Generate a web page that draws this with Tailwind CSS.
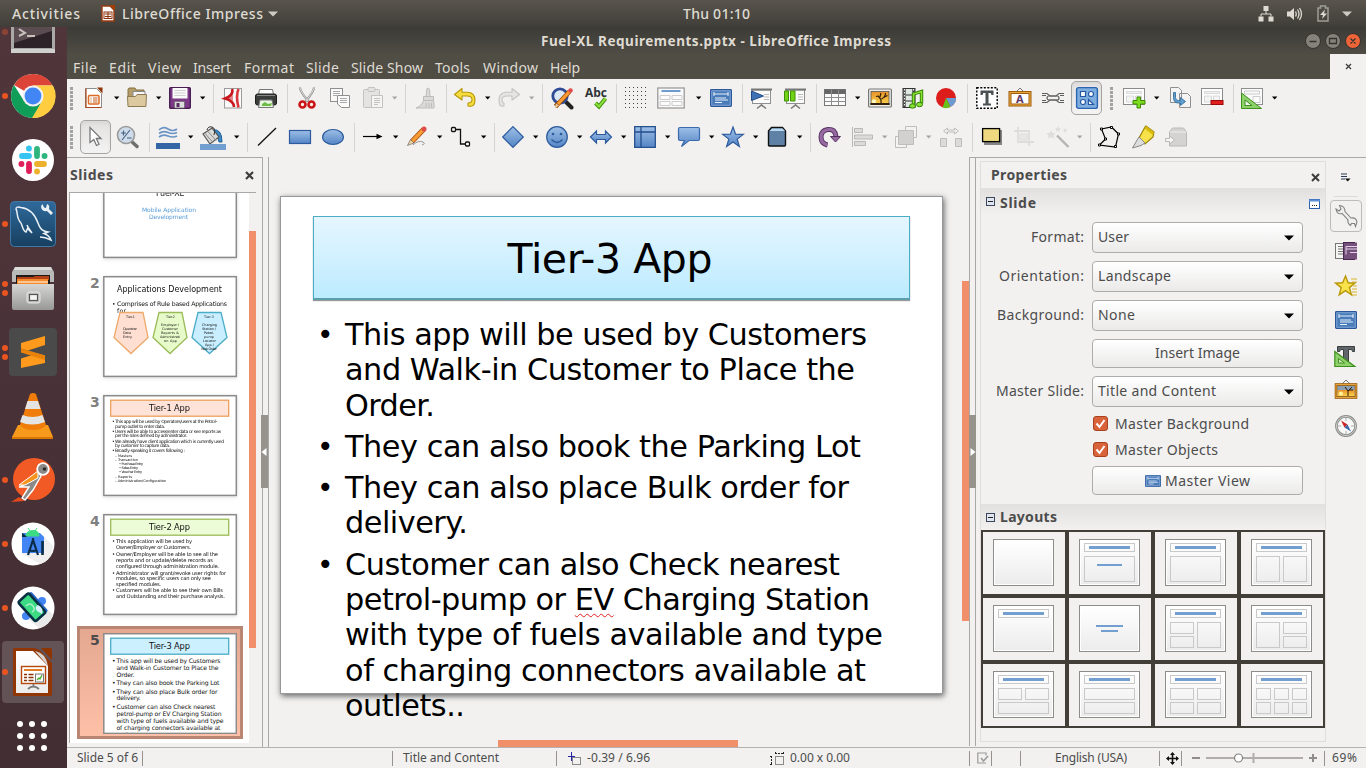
<!DOCTYPE html>
<html lang="en">
<head>
<meta charset="utf-8">
<title>Fuel-XL Requirements.pptx - LibreOffice Impress</title>
<script src="https://cdn.jsdelivr.net/npm/@tailwindcss/browser@4"></script>
</head>
<body class="w-[1366px] h-[768px] overflow-hidden flex flex-col bg-[#f2f1f0] text-[#4c4c4c] text-[14.5px] font-['Noto_Sans','Liberation_Sans',sans-serif]">

<!-- shared symbols -->
<svg class="absolute w-0 h-0">
  <defs>
    <linearGradient id="blue" x1="0" y1="0" x2="0" y2="1"><stop offset="0" stop-color="#9dbfe6"/><stop offset="1" stop-color="#5585c6"/></linearGradient>
    <linearGradient id="gold" x1="0" y1="0" x2="0" y2="1"><stop offset="0" stop-color="#e8912a"/><stop offset="1" stop-color="#f9d24a"/></linearGradient>
    <linearGradient id="paper" x1="0" y1="0" x2="0" y2="1"><stop offset="0" stop-color="#ffffff"/><stop offset="1" stop-color="#ececec"/></linearGradient>
    <linearGradient id="steel" x1="0" y1="0" x2="0" y2="1"><stop offset="0" stop-color="#d6d6d4"/><stop offset="1" stop-color="#989896"/></linearGradient>
  </defs>
  <symbol id="dd" viewBox="0 0 7 4"><path d="M1 .5h5.4L3.7 3.6z" fill="currentColor"/></symbol>
  <symbol id="handle" viewBox="0 0 3 23"><path d="M1.5 0v23" stroke="#a3a3a3" stroke-width="3" stroke-dasharray="3 1"/></symbol>
  <symbol id="pic" viewBox="0 0 24 24"><rect x=".6" y="3" width="22.8" height="18" rx="1" fill="#eeeeec" stroke="#777" stroke-width="1.2"/><rect x="3" y="5.4" width="18" height="13.2" fill="url(#gold)" stroke="#555" stroke-width=".8"/><circle cx="6" cy="15.5" r="2.2" fill="#fff6c0"/><path d="M3 17.5h18v1H3zM13 18c.5-4 0-5-3-8M13.500 13c2-1 4-3 4-6M12 11l1-4M15.500 11.500l4-2M11 10l-3 .5" stroke="#33200a" fill="none" stroke-width="1.2"/></symbol>
  <symbol id="master" viewBox="0 0 24 24"><rect x="1.600" y="3.600" width="20.800" height="16.800" rx=".8" fill="#4a7cba" stroke="#2c589a" stroke-width="1.200"/><rect x="2.800" y="4.800" width="18.400" height="14.400" fill="none" stroke="#8db1dc" stroke-width=".8"/><path d="M4.500 8h15M5 6v4M19 6v4M6 12h11M6 14h13M6 16.500h7" stroke="#e6effa" stroke-width="1" fill="none"/></symbol>
  <symbol id="slide" viewBox="0 0 24 24"><rect x="1.500" y="2.500" width="21" height="16" fill="#fdfdfd" stroke="#8b8b8b"/><path d="M4.500 5.500h15v2h-15zM4.500 10h7v6h-7zM13.500 10h6v6h-6z" fill="#f4f4f4" stroke="#cfcfcf" stroke-width=".8"/></symbol>
</svg>

<!-- top bar -->
<header class="h-[27px] shrink-0 flex items-center bg-linear-to-b from-[#59554d] to-[#403e39] text-[#dfdbd2] text-[14px] font-medium leading-[27px]">
  <span class="ml-[12px]" data-w="68">Activities</span>
  <svg class="ml-[21px] w-[14px] h-[17px]" viewBox="0 0 14 17"><path d="M1 1h8l4 4v11H1z" fill="#fdfdfd" stroke="#9a3c10" stroke-width="1.400"/><path d="M9 0h5v6z" fill="#a33e03"/><rect x="3" y="7" width="8" height="6.500" fill="#fff" stroke="#8a3208"/><path d="M4 9h6M4 11.500h6M7 7v6" stroke="#8a3208"/></svg>
  <span class="ml-[7px]" data-w="141">LibreOffice Impress</span>
  <svg class="ml-[5px] w-[10px] h-[6px]" viewBox="0 0 10 6"><path d="M0 .5h10L5 5.500z" fill="#cfcbc3"/></svg>
  <span class="ml-[405px]" data-w="67">Thu 01:10</span>
  <svg class="ml-[508px] w-[16px] h-[16px]" viewBox="0 0 16 16"><path d="M5.500 0h5v5h-5zM.5 10.500h5v5h-5zM10.500 10.500h5v5h-5z" fill="#dfdbd2"/><path d="M8 5v3M3 10.500V8h10v2.500" fill="none" stroke="#dfdbd2"/></svg>
  <svg class="ml-[12px] w-[17px] h-[16px]" viewBox="0 0 17 16"><path d="M1 5.500h3L8 2v12l-4-3.500H1z" fill="#dfdbd2"/><path d="M9.500 5.500q1.500 2.500 0 5M11.500 3.500q3 4.500 0 9M13.500 2q4 6 0 12" fill="none" stroke="#dfdbd2" stroke-width="1.300"/></svg>
  <svg class="ml-[13px] w-[14px] h-[17px]" viewBox="0 0 14 17"><path d="M2 3h2.500V1h5v2H12v13H2z" fill="none" stroke="#a09d96" stroke-width="1.500"/><path d="M9 4.500L4 10h3l-1 4 5-5.500H8z" fill="#dfdbd2"/></svg>
  <svg class="ml-[12px] w-[10px] h-[6px]" viewBox="0 0 10 6"><path d="M0 .5h10L5 5.500z" fill="#cfcbc3"/></svg>
</header>

<div class="flex flex-1 min-h-0">
  <!-- dock -->
  <nav class="w-[67px] shrink-0 overflow-hidden bg-linear-to-b from-[#50363b] to-[#422e33]">
    <div class="-mt-[27px] flex flex-col">
      <div class="h-[64px] flex items-center">
        <div class="w-[10px] flex flex-col items-center"><i class="size-[6px] rounded-full bg-[#8c4535]"></i></div>
        <svg class="size-[46px]" viewBox="0 0 46 46"><rect x="1" y="1" width="44" height="42" fill="#a9a9a7"/><rect x="1" y="40" width="44" height="4" fill="#d0d0ce"/><rect x="4" y="2" width="38" height="37" fill="#2d2228"/><path d="M4 2h38v20L4 34z" fill="#5a4c50"/><path d="M9 20l6 4-6 3M17 27h8" stroke="#c9c1bd" stroke-width="2" fill="none"/></svg>
      </div>
      <div class="h-[64px] flex items-center">
        <div class="w-[10px] flex flex-col items-center"><i class="size-[6px] rounded-full bg-[#e95420]"></i></div>
        <svg class="size-[46px]" viewBox="-23 -23 46 46"><circle r="22" fill="#fff"/><path d="M0 0L-19 -11A22 22 0 0 1 19.500 -10.500L0 -10.500z" fill="#db4437"/><path d="M-19 -11A22 22 0 0 0 0 22L9 5-9 5z" fill="#0f9d58"/><path d="M20 -10.500A22 22 0 0 1 -1 22L9.500 4.500 0 -10.500z" fill="#ffcd40"/><circle r="10.500" fill="#f1f1f1"/><circle r="8.400" fill="#4285f4"/></svg>
      </div>
      <div class="h-[64px] flex items-center pl-[10px]">
        <svg class="size-[46px]" viewBox="-23 -23 46 46"><circle r="21" fill="#fff"/><g stroke-width="5.800" stroke-linecap="round"><path d="M-4 -4h-7" stroke="#36c5f0"/><path d="M-4 -11.500h-.1" stroke="#36c5f0"/><path d="M4 -4v-7" stroke="#2eb67d"/><path d="M11.500 -4h.1" stroke="#2eb67d"/><path d="M4 4h7" stroke="#ecb22e"/><path d="M4 11.500h.1" stroke="#ecb22e"/><path d="M-4 4v7" stroke="#e01e5a"/><path d="M-11.500 4h-.1" stroke="#e01e5a"/></g></svg>
      </div>
      <div class="h-[64px] flex items-center">
        <div class="w-[10px] flex flex-col items-center"><i class="size-[6px] rounded-full bg-[#e95420]"></i></div>
        <svg class="size-[46px]" viewBox="0 0 46 46"><defs><linearGradient id="sea" x1="0" y1="0" x2="0" y2="1"><stop offset="0" stop-color="#2f6a9c"/><stop offset="1" stop-color="#173f5f"/></linearGradient></defs><rect x=".5" y=".5" width="45" height="45" rx="4" fill="url(#sea)" stroke="#3f78a5"/><path d="M11 22C6 17 8 11 6 8q0-3 5-1.500c8 1 14 7 17 15.500 2 6 4 8 10 9l-4 1.500c3 1 6 4 7 6.500-4-2-7-3-11-3M11 22c2 5 2 8 5 9l1.500-3.500L22 32c-2-3-4-5-5-8" fill="none" stroke="#e8f0f6" stroke-width="1.500"/><path d="M33 3q0 4 3 4l1-4q3 1 2 5l4 4-2 2-4-4q-6 1-6-5z" fill="#e8f0f6"/></svg>
      </div>
      <div class="h-[64px] flex items-center">
        <div class="w-[10px] flex flex-col items-center gap-[3px]"><i class="size-[6px] rounded-full bg-[#e95420]"></i><i class="size-[6px] rounded-full bg-[#e95420]"></i></div>
        <svg class="size-[46px]" viewBox="0 0 46 46"><path d="M5 2h36l3 5v10H2V7z" fill="#b9b9b7"/><path d="M5 2h36l1 3H4z" fill="#dcdcda"/><rect x="6" y="10" width="34" height="10" fill="#1d1a19"/><path d="M7 12h16l2-1h14v4H7z" fill="#b34316"/><path d="M7 14h31v6H7z" fill="#f58a2c"/><path d="M8 17h30" stroke="#ffd9b0" stroke-width="1.500"/><path d="M2 19h42v24q0 2-2 2H4q-2 0-2-2z" fill="url(#steel)"/><rect x="17" y="27" width="13" height="11" rx="2" fill="#c4c4c2" stroke="#e6e6e4"/><rect x="19.500" y="29.500" width="8" height="6" fill="#f4f4f2" stroke="#555" stroke-width="1.200"/></svg>
      </div>
      <div class="h-[64px] flex items-center">
        <div class="w-[10px] flex flex-col items-center gap-[3px]"><i class="size-[6px] rounded-full bg-[#e95420]"></i><i class="size-[6px] rounded-full bg-[#e95420]"></i></div>
        <svg class="w-[48px] h-[48px] -ml-[1px]" viewBox="0 0 48 48"><rect width="48" height="48" rx="4" fill="#4a4a4a"/><path d="M36 8v9L19 22.500l17 5V35l-24 5v-9.500L28 25.500 12 20.500V15z" fill="#ff9a1c"/><path d="M12 20.500l24 7V32l-24-7.500z" fill="#e8820a"/></svg>
      </div>
      <div class="h-[64px] flex items-center pl-[10px]">
        <svg class="size-[46px]" viewBox="0 0 46 46"><path d="M8 32h30l5 12v2H2v-2z" fill="#f79a1c"/><path d="M2 44h41v2H2z" fill="#d97700"/><path d="M20 1q3-2 6 0l10 31q-3 5-13 5T10 32z" fill="#f07d0a"/><path d="M17.500 8h10.500l2.500 8h-15.500z" fill="#e4e4e2"/><path d="M12.500 22q10 4 20 0l2.500 7q-13 5-25 0z" fill="#e4e4e2"/></svg>
      </div>
      <div class="h-[64px] flex items-center">
        <div class="w-[10px] flex flex-col items-center"><i class="size-[6px] rounded-full bg-[#e95420]"></i></div>
        <svg class="size-[46px]" viewBox="0 0 46 46"><circle cx="24" cy="22" r="21" fill="#f15a24"/><path d="M29 16L12 29l-3 1 10 0-7 11 3 2 8-10 8-14z" fill="#8c8a89" stroke="#fff" stroke-width="1.400"/><path d="M28 14L9 28h6l13-7z" fill="#f7941d" stroke="#fff" stroke-width="1"/><circle cx="33" cy="12" r="5.800" fill="#8c8a89" stroke="#fff" stroke-width="1.800"/><circle cx="34.500" cy="12" r="1.800" fill="#2c2c2c"/><path d="M1 45l8-5 6 4z" fill="#e2491c"/></svg>
      </div>
      <div class="h-[64px] flex items-center">
        <div class="w-[10px] flex flex-col items-center"><i class="size-[6px] rounded-full bg-[#e95420]"></i></div>
        <svg class="size-[46px]" viewBox="0 0 46 46"><circle cx="23" cy="23" r="21.500" fill="#fff"/><path d="M33 14l10 11q-1 14-13 18L12 33z" fill="#efefef"/><path d="M12 12h18l4 4v16H12z" fill="#4285f4"/><path d="M12 12v4h6z" fill="#073042"/><path d="M16 15q0-5 6.500-5.500T29 15zM18 7l2 3M27 7l-2 3" fill="#3ddc84" stroke="#3ddc84"/><path d="M23 19l-5 15M23 19l5 15M23 17v4M18.500 29q4.500 2 9 0" stroke="#0b2c45" stroke-width="2.200" fill="none"/><path d="M32.500 20v14" stroke="#0b2c45" stroke-width="2.600"/></svg>
      </div>
      <div class="h-[64px] flex items-center">
        <div class="w-[10px] flex flex-col items-center"><i class="size-[6px] rounded-full bg-[#e95420]"></i></div>
        <svg class="size-[46px]" viewBox="0 0 46 46"><circle cx="23" cy="23" r="21.500" fill="#fff"/><path d="M37 24l6 6q-5 11-14 13L17 33z" fill="#e9e9e9"/><circle cx="32" cy="16" r="4" fill="#4285f4"/><circle cx="16" cy="31" r="4" fill="#4285f4"/><g transform="rotate(-42 23 22)"><rect x="17" y="9" width="15" height="26" rx="2" fill="#2b67c8"/><rect x="15" y="8.500" width="14" height="26" rx="2" fill="#3ddc84" stroke="#073042" stroke-width="2.600"/></g><path d="M28 20q6 3 4 9l-5-3q-3-4 1-6z" fill="#d7effe"/><path d="M16 21q4-4 7 0t-1 6" stroke="#a6f0c8" stroke-width="1.500" fill="none"/></svg>
      </div>
      <div class="h-[64px] flex items-center">
        <div class="ml-[2px] w-[62px] h-[62px] rounded bg-white/17 flex items-center">
          <div class="w-[6px] flex justify-center"><i class="size-[6px] rounded-full bg-[#e95420]"></i></div>
          <svg class="ml-[3px] w-[43px] h-[50px]" viewBox="0 0 43 50"><path d="M4 1h19q6 1 10 7l8 8v31q0 2-2 2H4q-2 0-2-2V3q0-2 2-2z" fill="#913604"/><path d="M5 4h17l15 15v27H5z" fill="url(#paper)"/><path d="M24 4l13 15q-2-13-13-15z" fill="#d5d5d3"/><path d="M30 1h9q2 0 2 2v10z" fill="#8e3603"/><rect x="10.500" y="19.500" width="24" height="17" fill="#fff" stroke="#b5480d" stroke-width="1.400"/><path d="M13 23h18" stroke="#e37c28" stroke-width="2"/><path d="M13 27.500h3M13 30.500h3M13 33.500h3M17.500 27.500h5M17.500 30.500h5M17.500 33.500h5" stroke="#8a3208" stroke-width="1.500"/><rect x="24.500" y="27" width="8" height="8" fill="#fff" stroke="#777"/><path d="M26 33l2-2 1 1 2-4" stroke="#3fae2a" fill="none" stroke-width="1.300"/><path d="M22.500 37v3M17 42q5-5 11 0" stroke="#7b7b7b" stroke-width="1.800" fill="none"/></svg>
        </div>
      </div>
      <div class="h-[64px] flex items-center pl-[17px]">
        <div class="grid grid-cols-3 gap-[6px]">
          <i class="size-[6px] rounded-full bg-white"></i><i class="size-[6px] rounded-full bg-white"></i><i class="size-[6px] rounded-full bg-white"></i>
          <i class="size-[6px] rounded-full bg-white"></i><i class="size-[6px] rounded-full bg-white"></i><i class="size-[6px] rounded-full bg-white"></i>
          <i class="size-[6px] rounded-full bg-white"></i><i class="size-[6px] rounded-full bg-white"></i><i class="size-[6px] rounded-full bg-white"></i>
        </div>
      </div>
    </div>
  </nav>

  <div class="flex-1 min-w-0 flex flex-col">
    <!-- title bar -->
    <div class="h-[27px] shrink-0 flex items-center bg-linear-to-b from-[#3c3b37] to-[#4f4c44] text-[#dfdbd2] font-bold text-[13.500px] leading-[26px]">
      <span class="ml-[474px]" data-w="350">Fuel-XL Requirements.pptx - LibreOffice Impress</span>
      <svg class="ml-[414px] w-[56px] h-[16px]" viewBox="0 0 56 16"><g stroke="#35332e" stroke-width="1"><circle cx="8" cy="8" r="7.500" fill="#85827b"/><circle cx="28" cy="8" r="7.500" fill="#85827b"/><circle cx="48" cy="8" r="7.500" fill="#ee6337"/></g><path d="M4.500 8.500h7M24.500 5.500h7v5h-7zM45.500 5.500l5 5M50.500 5.500l-5 5" fill="none" stroke="#35332e" stroke-width="1.300"/></svg>
    </div>
    <!-- menu bar -->
    <div class="h-[25px] shrink-0 flex items-center bg-[#504d45] text-[#dfdbd2] leading-[23px] text-[14px]">
      <span class="mt-[2px] ml-[6px]" data-w="24">File</span>
      <span class="mt-[2px] ml-[12px]" data-w="27">Edit</span>
      <span class="mt-[2px] ml-[12px]" data-w="33">View</span>
      <span class="mt-[2px] ml-[12px]" data-w="38">Insert</span>
      <span class="mt-[2px] ml-[13px]" data-w="50">Format</span>
      <span class="mt-[2px] ml-[12px]" data-w="33">Slide</span>
      <span class="mt-[2px] ml-[12px]" data-w="72">Slide Show</span>
      <span class="mt-[2px] ml-[12px]" data-w="35">Tools</span>
      <span class="mt-[2px] ml-[13px]" data-w="55">Window</span>
      <span class="mt-[2px] ml-[12px]" data-w="30">Help</span>
      <div class="ml-auto w-[36px] h-[25px] bg-[#f2f1f0] flex items-center justify-center"><svg class="size-[7px]" viewBox="0 0 7 7"><path d="M1 1l5 5M6 1L1 6" stroke="#3c3c3c" stroke-width="1.300"/></svg></div>
    </div>

    <!-- standard toolbar -->
    <div class="h-[38px] shrink-0 flex items-center text-black">
      <svg class="ml-[3px] w-[3px] h-[23px]"><use href="#handle"/></svg>
      <svg class="ml-[9px] size-[24px]" viewBox="0 0 24 24"><path d="M3.500 2.500h11l5 5v14h-16z" fill="#fff" stroke="#8d8d8d"/><path d="M4 2.500v19h15.500" stroke="#a8481a" stroke-width="1.200" fill="none"/><path d="M15 1.500h5.500v6z" fill="#8d3507"/><rect x="6.500" y="9.500" width="10.500" height="8.500" rx="1" fill="#fff" stroke="#dc6b25" stroke-width="1.500"/><path d="M8.500 12h1M11 12h4.500M8.500 14h1M11 14h4.500M8.500 16h1M11 16h4.500" stroke="#c25a1b"/></svg>
      <svg class="ml-[7px] w-[7px] h-[4px]"><use href="#dd"/></svg>
      <svg class="ml-[5px] size-[24px]" viewBox="0 0 24 24"><path d="M3 3.500l1-1.500h6l1 2h8v8H3z" fill="#b59d6b" stroke="#84713f"/><path d="M8 5.500h12V16H8z" fill="#f7f7f7" stroke="#888"/><path d="M2.500 10.500h8l1.500-2h9.500l-.6 12H3z" fill="#dcc9a0" stroke="#8e7b55"/></svg>
      <svg class="ml-[6px] w-[7px] h-[4px]"><use href="#dd"/></svg>
      <svg class="ml-[6px] size-[24px]" viewBox="0 0 24 24"><rect x="1.700" y="1.700" width="20.600" height="20.600" rx="1" fill="#7c3a86" stroke="#4a1d55" stroke-width="1.400"/><rect x="4.500" y="2" width="15" height="10.500" fill="#fafafa"/><path d="M6.500 4.500h11M6.500 7h11M6.500 9.500h11" stroke="#cfcfcf"/><path d="M6.500 15.500h10v6.500h-10z" fill="#ddd" stroke="#666" stroke-width=".7"/><rect x="8.500" y="17" width="3" height="4" fill="#5d2868"/></svg>
      <svg class="ml-[7px] w-[7px] h-[4px]"><use href="#dd"/></svg>
      <i class="ml-[7px] w-px h-[29px] bg-[#d6d4d2]"></i>
      <svg class="ml-[7px] size-[24px]" viewBox="0 0 24 24"><rect x="3.500" y="2.500" width="17" height="19.500" fill="#fafafa" stroke="#9b9b9b"/><path d="M11 3q2 6-7 9.500Q13 15 13 21" stroke="#c8171d" stroke-width="2.600" fill="none"/><path d="M17.500 3q-3 7 0 18.500" stroke="#d8363b" stroke-width="2.600" fill="none"/><path d="M4 12l8-3v6z" fill="#c8171d" opacity=".5"/></svg>
      <svg class="ml-[9px] size-[24px]" viewBox="0 0 24 24"><path d="M5.500 3.500h13l1 5h-15z" fill="#fdfdfd" stroke="#777"/><rect x="1.500" y="8" width="21" height="11" rx="2" fill="#3b3d3a" stroke="#1d1e1c"/><path d="M3 9.500h18" stroke="#888"/><path d="M6 14h12l1.500 7.500h-15z" fill="#e9f6e0" stroke="#777"/><path d="M8 18l3-2 3 2 4-1-1 3H8z" fill="#6fbb48"/></svg>
      <i class="ml-[9px] w-px h-[29px] bg-[#d6d4d2]"></i>
      <svg class="ml-[7px] size-[24px]" viewBox="0 0 24 24"><path d="M5 1.500q0 4 8.500 14M19 1.500q0 4-8.500 14" stroke="#909090" stroke-width="2.200" fill="none"/><path d="M5 2q1 4 8 13M19 2q-1 4-8 13" stroke="#eee" stroke-width=".8" fill="none"/><circle cx="7.500" cy="18.500" r="3" fill="none" stroke="#cc1616" stroke-width="2.600"/><circle cx="16.500" cy="18.500" r="3" fill="none" stroke="#cc1616" stroke-width="2.600"/></svg>
      <svg class="ml-[9px] size-[24px]" viewBox="0 0 24 24" fill="#fafafa" stroke="#8f8f8f"><rect x="2.500" y="2.500" width="12" height="13"/><path d="M5 5.500h7M5 7.500h7M5 9.500h4" stroke="#aaa"/><path d="M9.500 9.500h12v12h-8l-4-3.500z"/><path d="M12 12.500h7M12 14.500h7M12 16.500h7" stroke="#aaa"/></svg>
      <svg class="ml-[9px] size-[24px]" viewBox="0 0 24 24" fill="#e4e3e2" stroke="#c3c2c1"><rect x="2.500" y="3.500" width="16" height="18" rx="1"/><rect x="7" y="1.500" width="7" height="4" rx="1"/><path d="M10.500 9.500h11v12h-11z" fill="#f4f4f4"/><path d="M13 12.500h6M13 14.500h6M13 16.500h6M13 18.500h4"/></svg>
      <svg class="ml-[6px] w-[7px] h-[4px] text-[#a5a4a3]"><use href="#dd"/></svg>
      <i class="ml-[7px] w-px h-[29px] bg-[#d6d4d2]"></i>
      <svg class="ml-[8px] size-[24px]" viewBox="0 0 24 24" fill="#dbdad9" stroke="#bcbbba"><path d="M13 2.500q2-1 2.500 1l.5 7h-4z"/><path d="M9.500 10.500h10v4h-10z"/><path d="M9.500 14.500h10q1 4 .5 7.500H2q6-2 7.500-7.500z"/><path d="M12 17v4M15 17v4M17.500 17v4"/></svg>
      <i class="ml-[8px] w-px h-[29px] bg-[#d6d4d2]"></i>
      <svg class="ml-[6px] size-[24px]" viewBox="0 0 24 24"><path d="M1.500 8.500L9 2.500v3.800h6q7 .7 7 8t-7 5.700v-3q4 0 4-3.500t-5-3.500H9v4z" fill="#f5dd3d" stroke="#b8960a" stroke-linejoin="round" stroke-width="1.100"/></svg>
      <svg class="ml-[7px] w-[7px] h-[4px]"><use href="#dd"/></svg>
      <svg class="ml-[6px] size-[24px]" viewBox="0 0 24 24"><path d="M22.500 8.500L15 2.500v3.800H9q-7 .7-7 8t5 5.700v-3q-2 0-2-3.500t5-3.500h5v4z" fill="#e6e5e4" stroke="#c4c3c2" stroke-linejoin="round" stroke-width="1.100"/></svg>
      <svg class="ml-[7px] w-[7px] h-[4px] text-[#a5a4a3]"><use href="#dd"/></svg>
      <i class="ml-[7px] w-px h-[29px] bg-[#d6d4d2]"></i>
      <svg class="ml-[7px] size-[24px]" viewBox="0 0 24 24"><path d="M16 16l5.500 5.500" stroke="#222" stroke-width="4" stroke-linecap="round"/><circle cx="10" cy="10" r="7.200" fill="#dce8f6" stroke="#2f4b93" stroke-width="2.800"/><path d="M19.500 5.500L8 18l-2.500 2.500" stroke="#9c4a0a" stroke-width="4.600"/><path d="M19.500 5.500L8 18" stroke="#f79a32" stroke-width="3.200"/><circle cx="20.500" cy="4.500" r="2.300" fill="#e14b4b"/><path d="M9 19.500l-4.500 3 1.500-5z" fill="#e7c9a0"/></svg>
      <svg class="ml-[10px] size-[24px]" viewBox="0 0 24 24"><text x="1" y="11" font-family="Open Sans, sans-serif" font-weight="700" font-size="12" textLength="22" lengthAdjust="spacingAndGlyphs" fill="#2e3436">Abc</text><path d="M11.500 17l3.500 3.500 6.500-8" stroke="#3f8f0a" stroke-width="4" fill="none"/><path d="M11.500 17l3.500 3.500 6.500-8" stroke="#8be03c" stroke-width="2" fill="none"/></svg>
      <i class="ml-[8px] w-px h-[29px] bg-[#d6d4d2]"></i>
      <svg class="ml-[7px] size-[24px]" viewBox="0 0 24 24" stroke="#444" stroke-dasharray="1 3"><path d="M1 1.500h21M1 5.500h21M1 9.500h21M1 13.500h21M1 17.500h21M1 21.500h21"/></svg>
      <svg class="ml-[9px] w-[28px] h-[24px]" viewBox="0 0 28 24"><rect x=".8" y="2" width="26.400" height="20" fill="#fbfbfb" stroke="#9a9a9a" stroke-width="1.300"/><path d="M4.500 5h19" stroke="#6d9bd0" stroke-width="2"/><path d="M3 9.500h10v4H3zM15 9.500h10v4H15zM3 15.500h10v4H3zM15 15.500h10v4H15z" fill="none" stroke="#ccc"/></svg>
      <svg class="ml-[10px] w-[7px] h-[4px]"><use href="#dd"/></svg>
      <svg class="ml-[7px] size-[24px]"><use href="#master"/></svg>
      <i class="ml-[9px] w-px h-[29px] bg-[#d6d4d2]"></i>
      <svg class="ml-[6px] size-[24px]" viewBox="0 0 24 24"><path d="M12.500 18v2M8 22.500l4.500-3.500 4.500 3.500" stroke="#777" stroke-width="1.500" fill="none"/><rect x="3.500" y="4" width="18" height="13.500" fill="#fbfbfb" stroke="#8f8f8f"/><path d="M2 3.500h21" stroke="#777" stroke-width="2"/><path d="M15 8.500h5M15 11h5M15 13.500h5" stroke="#bbb"/><path d="M2.500 5v9.500l12-4.500z" fill="#3e72b5" stroke="#234c85"/></svg>
      <svg class="ml-[10px] size-[24px]" viewBox="0 0 24 24"><path d="M12.500 18v2M8 22.500l4.500-3.500 4.500 3.500" stroke="#777" stroke-width="1.500" fill="none"/><rect x="3.500" y="4" width="18" height="13.500" fill="#fbfbfb" stroke="#8f8f8f"/><path d="M2 3.500h21" stroke="#777" stroke-width="2"/><path d="M15 8.500h5M15 11h5M15 13.500h5" stroke="#bbb"/><path d="M1.500 5h4v10h-4zM7.500 5h4.500v10H7.500z" fill="#73d216" stroke="#3d9307"/></svg>
      <i class="ml-[9px] w-px h-[29px] bg-[#d6d4d2]"></i>
      <svg class="ml-[6px] size-[24px]" viewBox="0 0 24 24"><rect x="1.500" y="3.500" width="21" height="16" fill="#fbfbfb" stroke="#777"/><rect x="1.500" y="3.500" width="21" height="4.500" fill="#666"/><path d="M1.500 11.500h21M1.500 15.500h21M8.500 3.500v16M15.500 3.500v16" stroke="#8d8d8d"/></svg>
      <svg class="ml-[7px] w-[7px] h-[4px]"><use href="#dd"/></svg>
      <svg class="ml-[7px] size-[24px]"><use href="#pic"/></svg>
      <svg class="ml-[9px] size-[24px]" viewBox="0 0 24 24"><rect x="2" y="2.500" width="12" height="19" fill="#dfe9e2" stroke="#333"/><path d="M3.500 3v18M12.500 3v18" stroke="#333" stroke-width="2.200"/><path d="M3.500 3v18M12.500 3v18" stroke="#eee" stroke-dasharray="1.500 1.500"/><path d="M5 9h7M5 15h7" stroke="#333"/><path d="M12.500 19V8l8-2.500v12" stroke="#2f7d05" stroke-width="3.400" fill="none"/><path d="M12.500 19V8l8-2.500v12" stroke="#8ae234" stroke-width="1.600" fill="none"/><ellipse cx="11.500" cy="20" rx="3" ry="2.200" fill="#8ae234" stroke="#2f7d05"/><ellipse cx="18.500" cy="18.500" rx="3" ry="2.200" fill="#8ae234" stroke="#2f7d05"/></svg>
      <svg class="ml-[9px] size-[24px]" viewBox="0 0 24 24"><circle cx="12" cy="12" r="10" fill="#dd1c1c"/><path d="M12 12h10a10 10 0 0 1-5.500 9z" fill="#6c9bd2"/><path d="M12 12l4.500 9q-4 2-8 .5z" fill="#66c21a"/></svg>
      <i class="ml-[9px] w-px h-[29px] bg-[#d6d4d2]"></i>
      <svg class="ml-[7px] size-[24px]" viewBox="0 0 24 24"><rect x="1.800" y="1.800" width="20.400" height="20.400" fill="#fff" stroke="#000" stroke-width="1.400" stroke-dasharray="2 1.500"/><path d="M5.500 4.500h13V9h-2l-.8-2H13.500v10.500h2.500v2H8v-2h2.500V7H8.300l-.8 2h-2z" fill="#4b5052"/></svg>
      <svg class="ml-[9px] size-[24px]" viewBox="0 0 24 24"><path d="M8 6l4-4 4 4" fill="none" stroke="#777"/><rect x="2" y="6.500" width="20" height="12.500" fill="#fff" stroke="#9a5a07" stroke-width="3"/><rect x="2" y="6.500" width="20" height="12.500" fill="none" stroke="#e8a33c" stroke-width="1.200"/><text x="8" y="16.500" font-family="Open Sans, sans-serif" font-weight="700" font-size="11" fill="#5c3566">A</text></svg>
      <svg class="ml-[9px] size-[24px]" viewBox="0 0 24 24" fill="none" stroke="#5c5f5b" stroke-width="1.200"><path d="M1 7.500h5l3 2.500h6l3-2.500h5M1 9.500h4M19 9.500h4M1 16.500h5l3-2.500h6l3 2.500h5M1 14.500h4M19 14.500h4"/><rect x="6" y="10" width="12" height="4" rx="2"/></svg>
      <div class="ml-[6px] w-[31px] h-[34px] rounded-[5px] border border-[#a6a4a2] bg-linear-to-b from-[#e4e3e2] to-[#f4f3f3] shadow-inner flex items-center justify-center"><svg class="size-[24px]" viewBox="0 0 24 24"><rect x="1.600" y="1.600" width="20.800" height="20.800" rx="2" fill="#7fadde" stroke="#2a65b4" stroke-width="1.400"/><path d="M5.500 5.500h5v5h-5zM13.500 13.500v5h5z" fill="#fff" stroke="#2359a5" stroke-width="1.200"/><circle cx="16" cy="8" r="2.500" fill="#fff" stroke="#2359a5" stroke-width="1.200"/><circle cx="8" cy="16" r="2.500" fill="#fff" stroke="#2359a5" stroke-width="1.200"/></svg></div>
      <svg class="ml-[8px] w-[3px] h-[23px]"><use href="#handle"/></svg>
      <svg class="ml-[9px] size-[24px]" viewBox="0 0 24 24"><use href="#slide"/><path d="M15 11h3.500v3.500H23V18h-4.500v4H15v-4h-4v-3.500h4z" fill="#7edc1f" stroke="#3b8a05"/></svg>
      <svg class="ml-[7px] w-[7px] h-[4px]"><use href="#dd"/></svg>
      <svg class="ml-[8px] size-[24px]" viewBox="0 0 24 24"><path d="M2.500 1.500h8l3 3v12h-11zM11.500 7.500h8l3 3v11h-11z" fill="#f4f4f4" stroke="#8f8f8f"/><path d="M7.500 6.500v5q0 3 3 3h2v-3l5 4-5 4v-2.500h-2q-5 0-5-5.500V6.500z" fill="#5f9fd0" stroke="#2a6496" stroke-width=".8"/></svg>
      <svg class="ml-[8px] size-[24px]" viewBox="0 0 24 24"><use href="#slide"/><rect x="11" y="14.500" width="12" height="4" fill="#e01f1f" stroke="#9b0808"/></svg>
      <i class="ml-[9px] w-px h-[29px] bg-[#d6d4d2]"></i>
      <svg class="ml-[6px] size-[24px]" viewBox="0 0 24 24"><rect x="1.500" y="2.500" width="21" height="16" fill="#fbfbfb" stroke="#8f8f8f"/><path d="M4.500 5h15v3h-15zM13 10.500h7v6h-7z" fill="none" stroke="#ccc"/><path d="M1.500 7v15.500h20z" fill="#8ed06a" stroke="#3e8f1d"/><path d="M5 14v5.500h7z" fill="#f4f4f4" stroke="#3e8f1d"/></svg>
      <svg class="ml-[7px] w-[7px] h-[4px]"><use href="#dd"/></svg>
    </div>

    <!-- drawing toolbar -->
    <div class="h-[40px] shrink-0 flex items-center text-black">
      <svg class="ml-[3px] w-[3px] h-[23px]"><use href="#handle"/></svg>
      <div class="ml-[7px] w-[31px] h-[34px] rounded-[5px] border border-[#a6a4a2] bg-linear-to-b from-[#e2e1e0] to-[#f4f3f3] shadow-inner flex items-center justify-center"><svg class="size-[24px]" viewBox="0 0 24 24"><path d="M6 2.500v15l3.800-3 2.700 6 2.500-1.200-2.700-5.800H17z" fill="#fff" stroke="#777" stroke-width="1.300"/></svg></div>
      <svg class="ml-[5px] size-[24px]" viewBox="0 0 24 24"><path d="M14 15l7 6.500" stroke="#6f6f6d" stroke-width="3.500" stroke-linecap="round"/><circle cx="10" cy="10" r="8.500" fill="#cddbeb" stroke="#9b9b99" stroke-width="1.600"/><path d="M5 8h5M7.500 5.500v5M11 13h4.500M6 15l8-10" stroke="#45607f" stroke-width="1.100"/></svg>
      <i class="ml-[9px] w-px h-[29px] bg-[#d6d4d2]"></i>
      <svg class="ml-[6px] size-[24px]" viewBox="0 0 24 24"><path d="M3 5q4-4 9-1t9 0M3 8.500q4-3 9-1t9 0M3 12q4-3 9-1t9 0" stroke="#6a94c6" stroke-width="1.700" fill="none"/><rect x="0" y="18" width="24" height="6" fill="#3465a4"/></svg>
      <svg class="ml-[7px] w-[7px] h-[4px]"><use href="#dd"/></svg>
      <svg class="ml-[6px] w-[26px] h-[26px]" viewBox="0 0 26 26"><path d="M12 6q10-2 10 12h-3q-1-7-7-8z" fill="#3b8ac6" stroke="#1f5f96"/><path d="M3 10l9-6 7 9-9 7z" fill="#d9d9d7" stroke="#555" stroke-width="1.200"/><path d="M5 9.500l8 9M8 7.500l8 9" stroke="#8b8b89"/><path d="M7 6q1-4 5-3t2 8" fill="none" stroke="#333"/><rect x="0" y="20" width="26" height="6" fill="#729fcf"/></svg>
      <svg class="ml-[7px] w-[7px] h-[4px]"><use href="#dd"/></svg>
      <i class="ml-[7px] w-px h-[29px] bg-[#d6d4d2]"></i>
      <svg class="ml-[7px] size-[24px]" viewBox="0 0 24 24"><path d="M3 20.500L21 3" stroke="#111" stroke-width="1.300"/></svg>
      <svg class="ml-[9px] size-[24px]" viewBox="0 0 24 24"><rect x="1.500" y="5.500" width="21" height="13" fill="url(#blue)" stroke="#2c5a9c" stroke-width="1.200"/></svg>
      <svg class="ml-[9px] size-[24px]" viewBox="0 0 24 24"><ellipse cx="12" cy="12" rx="10.400" ry="7.500" fill="url(#blue)" stroke="#2c5a9c" stroke-width="1.200"/></svg>
      <i class="ml-[9px] w-px h-[29px] bg-[#d6d4d2]"></i>
      <svg class="ml-[6px] size-[24px]" viewBox="0 0 24 24"><path d="M2 11.500h15" stroke="#000" stroke-width="1.200"/><path d="M15.500 8.700l6 2.800-6 2.800z"/></svg>
      <svg class="ml-[7px] w-[7px] h-[4px]"><use href="#dd"/></svg>
      <svg class="ml-[6px] size-[24px]" viewBox="0 0 24 24"><path d="M8 20q5-5 10-3 3 2-1 3" stroke="#999" fill="none"/><path d="M18.500 4.500L7 16.500" stroke="#a34c09" stroke-width="5.200"/><path d="M18.500 4.500L7 16.500" stroke="#f69a35" stroke-width="3.600"/><circle cx="19" cy="4" r="2.500" fill="#e04a4a"/><path d="M5.500 14.500l3.500 3.500-6.500 2.500z" fill="#ecd2a5" stroke="#555" stroke-width=".6"/></svg>
      <svg class="ml-[7px] w-[7px] h-[4px]"><use href="#dd"/></svg>
      <svg class="ml-[6px] size-[24px]" viewBox="0 0 24 24" fill="#fff" stroke="#111" stroke-width="1.300"><path d="M5 4.500h6.500v14.500H17" fill="none"/><rect x="2.500" y="2.500" width="4" height="4" rx="1"/><rect x="16.500" y="17" width="4" height="4" rx="1"/></svg>
      <svg class="ml-[7px] w-[7px] h-[4px]"><use href="#dd"/></svg>
      <i class="ml-[7px] w-px h-[29px] bg-[#d6d4d2]"></i>
      <svg class="ml-[6px] size-[24px]" viewBox="0 0 24 24"><path d="M12 1.700L22.300 12 12 22.300 1.700 12z" fill="url(#blue)" stroke="#2c5a9c" stroke-width="1.200"/></svg>
      <svg class="ml-[7px] w-[7px] h-[4px]"><use href="#dd"/></svg>
      <svg class="ml-[6px] size-[24px]" viewBox="0 0 24 24"><circle cx="12" cy="12" r="10.300" fill="url(#blue)" stroke="#2c5a9c" stroke-width="1.200"/><circle cx="8" cy="9" r="1.300" fill="#2c5a9c"/><circle cx="16" cy="9" r="1.300" fill="#2c5a9c"/><path d="M6.500 14.500q5.500 6 11 0" stroke="#2c5a9c" stroke-width="1.300" fill="none"/></svg>
      <svg class="ml-[7px] w-[7px] h-[4px]"><use href="#dd"/></svg>
      <svg class="ml-[6px] size-[24px]" viewBox="0 0 24 24"><path d="M1.500 12l6-6v3.500h9V6l6 6-6 6v-3.500h-9V18z" fill="url(#blue)" stroke="#2c5a9c" stroke-width="1.200"/></svg>
      <svg class="ml-[7px] w-[7px] h-[4px]"><use href="#dd"/></svg>
      <svg class="ml-[6px] size-[24px]" viewBox="0 0 24 24"><path d="M1.700 1.700h20.600v20.600H1.700zM1.700 7h20.600M8 1.700v20.600" fill="url(#blue)" stroke="#254f8d" stroke-width="1.300"/></svg>
      <svg class="ml-[7px] w-[7px] h-[4px]"><use href="#dd"/></svg>
      <svg class="ml-[6px] size-[24px]" viewBox="0 0 24 24"><path d="M3 2.500h18q1.500 0 1.500 1.500v10q0 1.500-1.500 1.500h-9L4.500 21.500l3-6H3Q1.500 15.500 1.500 14V4Q1.500 2.500 3 2.500z" fill="url(#blue)" stroke="#3a6aab" stroke-width="1.200"/></svg>
      <svg class="ml-[7px] w-[7px] h-[4px]"><use href="#dd"/></svg>
      <svg class="ml-[6px] size-[24px]" viewBox="0 0 24 24"><path d="M12 2l2.600 7.200 7.700.2-6.100 4.700 2.200 7.400-6.400-4.400-6.400 4.400 2.200-7.400L1.700 9.400l7.700-.2z" fill="url(#blue)" stroke="#2c5a9c" stroke-width="1.200"/></svg>
      <svg class="ml-[7px] w-[7px] h-[4px]"><use href="#dd"/></svg>
      <svg class="ml-[6px] size-[24px]" viewBox="0 0 24 24"><path d="M3.500 6l3-3.500h11l3 3.500v14q0 1-1 1h-15q-1 0-1-1z" fill="#5f81a6" stroke="#111" stroke-width="1.400"/><path d="M4.500 6l2.500-2.500h10.500L20 6z" fill="#b9d8f2"/></svg>
      <svg class="ml-[7px] w-[7px] h-[4px]"><use href="#dd"/></svg>
      <i class="ml-[7px] w-px h-[29px] bg-[#d6d4d2]"></i>
      <svg class="ml-[6px] size-[24px]" viewBox="0 0 24 24"><path d="M10.500 20Q4 18.500 4 12t7-7.500 8 7" fill="none" stroke="#553061" stroke-width="5"/><path d="M10.500 20Q4 18.500 4 12t7-7.500 8 7" fill="none" stroke="#966aa0" stroke-width="3.200"/><path d="M13.500 11.500h10l-5 5.500z" fill="#966aa0" stroke="#553061"/></svg>
      <svg class="ml-[9px] size-[24px]" viewBox="0 0 24 24" fill="#dcdbda" stroke="#b9b8b7"><path d="M2.500 2v20" /><path d="M4.500 3.500h8v4h-8zM4.500 10h18v4h-18zM4.500 16.500h11v4h-11z"/></svg>
      <svg class="ml-[7px] w-[7px] h-[4px] text-[#a5a4a3]"><use href="#dd"/></svg>
      <svg class="ml-[6px] size-[24px]" viewBox="0 0 24 24" fill="#f4f3f2" stroke="#bebdbc"><path d="M11.500 1.500h11v11h-11zM1.500 11.500h11v11h-11z"/><path d="M4.500 5.500h15v14h-15z" fill="#d2d1d0"/></svg>
      <svg class="ml-[7px] w-[7px] h-[4px] text-[#a5a4a3]"><use href="#dd"/></svg>
      <svg class="ml-[7px] size-[24px]" viewBox="0 0 24 24" fill="#dcdbda" stroke="#bebdbc"><path d="M1.500 13.500h6v8h-6zM16.500 13.500h6v8h-6z"/><path d="M4.500 6l4-3v2h7V3l4 3-4 3V7h-7v2z" fill="#eee"/></svg>
      <i class="ml-[9px] w-px h-[29px] bg-[#d6d4d2]"></i>
      <svg class="ml-[7px] size-[24px]" viewBox="0 0 24 24"><rect x="4" y="5" width="18" height="15" fill="#000" opacity=".45"/><rect x="2.600" y="3.600" width="17" height="13" fill="#efd980" stroke="#000" stroke-width="1.300"/></svg>
      <svg class="ml-[8px] size-[24px]" viewBox="0 0 24 24" fill="none" stroke="#dddcdb" stroke-width="1.800"><path d="M6 2v15h16M2 6h15v15"/><path d="M8 9h7v6H8z" fill="#e9e8e7" stroke-width="1"/></svg>
      <svg class="ml-[10px] size-[24px]" viewBox="0 0 24 24"><path d="M11 10.500L22.500 22" stroke="#b5b4b3" stroke-width="2.400"/><path d="M5 5.500l1.500 2.500h3L7.500 10.500l.5 3-3-1.500-3 1.500.5-3L.5 8h3zM12 1l1 2.200h2l-1.500 1.500.5 2L12 5.700 10 6.700l.5-2L9 3.200h2zM19 3l.7 1.500h1.800L20 6l.3 1.500-1.300-.8-1.300.8L18 6l-1.500-1.500h1.800z" fill="#dedddc"/></svg>
      <svg class="ml-[6px] w-[7px] h-[4px] text-[#a5a4a3]"><use href="#dd"/></svg>
      <i class="ml-[7px] w-px h-[29px] bg-[#d6d4d2]"></i>
      <svg class="ml-[6px] size-[24px]" viewBox="0 0 24 24" stroke="#000" fill="none"><path d="M4.500 4l10-2 7 7-3 13L2.500 20l6-6z" stroke-width="1.200"/><path d="M3.500 3h2v2h-2zM13.500 1.500h2v2h-2zM20.500 8h2v2h-2zM17.500 20.500h2v2h-2zM1.500 19h2v2h-2zM7.500 13h2v2h-2z" fill="#fff"/></svg>
      <svg class="ml-[10px] size-[24px]" viewBox="0 0 24 24"><path d="M14 2l1-1 8 6-1 5-8 7-6-6z" fill="#f7e14b" stroke="#9a8408" stroke-width="1.200"/><path d="M15 1l8 6-1 3-8-6z" fill="#d8b90e"/><path d="M8 12l6 6-4 2.500-8.500 2.500 4-7z" fill="#ddd" stroke="#888"/></svg>
      <svg class="ml-[9px] size-[24px]" viewBox="0 0 24 24" fill="#d4d3d2" stroke="#b9b8b7"><path d="M5.500 7l3-4h11l3 4v14h-17z"/><path d="M6 7h16.500" stroke="#efefef"/><path d="M1.500 13.500h4V11l5 4-5 4v-2.500h-4z" fill="#f6f6f6"/></svg>
    </div>

    <!-- work area -->
    <main class="flex-1 min-h-0 flex">
      <!-- slide panel -->
      <section class="w-[196px] shrink-0 h-[590px] border-t border-r border-[#a9a8a6] flex flex-col overflow-hidden">
        <div class="h-[34px] shrink-0 flex items-center pl-[3px] font-bold text-[14px] leading-[36px]">
          <span data-w="43">Slides</span>
          <svg class="ml-[132px] size-[9px]" viewBox="0 0 9 9"><path d="M1 1l7 7M8 1L1 8" stroke="#3c3c3c" stroke-width="2.200"/></svg>
        </div>
        <div class="ml-[2px] w-[187px] h-[551px] flex border-l border-t border-[#a9a8a6] bg-white overflow-hidden">
          <div class="w-[179px] shrink-0 -mt-[45px] flex flex-col gap-[3px] pl-[7px] font-['DejaVu_Sans'] text-[14px] font-bold text-[#808080]">
            <div class="w-[166px] h-[116px] shrink-0 pl-[26px] pt-[9px]">
              <svg class="w-[134px] h-[102px] overflow-visible drop-shadow" viewBox="0 .5 134 102" font-weight="400"><rect x=".8" y="1.200" width="132.500" height="99.700" fill="#fff" stroke="#8b8b8b" stroke-width="1.500"/><text x="53" y="39" font-size="8" textLength="28" fill="#222">Fuel-XL</text><g fill="#5b9bd5" font-size="6"><text x="39" y="55" textLength="54">Mobile Application</text><text x="46" y="62.500" textLength="39">Development</text></g></svg>
            </div>
            <div class="w-[166px] h-[116px] shrink-0 flex pt-[9px] pl-[13px]">
              <span class="w-[13px] leading-[14px]">2</span>
              <svg class="w-[134px] h-[102px] shrink-0 overflow-visible drop-shadow" viewBox="0 .5 134 102" font-weight="400" fill="#111"><rect x=".8" y="1.200" width="132.500" height="99.700" fill="#fff" stroke="#8b8b8b" stroke-width="1.500"/><text x="14" y="16" font-size="8.500" textLength="105" lengthAdjust="spacingAndGlyphs">Applications Development</text><text x="9" y="30" font-size="6">•</text><g font-size="6.200"><text x="14" y="30" textLength="110">Comprises of Rule based Applications</text><text x="14" y="37" textLength="9">for</text></g>
                <path d="M17 37h23l5 25-17 16-17-16z" fill="#ffdfd2" stroke="#eea86a" stroke-width="1.300"/><path d="M56 37h23l5 25-17 16-17-16z" fill="#e6fbc9" stroke="#9bbb59" stroke-width="1.300"/><path d="M95 37h23l6 25-17.500 16L89 62z" fill="#c8eeff" stroke="#4bacc6" stroke-width="1.300"/>
                <g font-size="3.400"><text x="23" y="42" textLength="9">Tier-1</text><text x="20" y="54" textLength="14">Operator</text><text x="20" y="58" textLength="8">Data</text><text x="20" y="62" textLength="9">Entry</text><text x="63" y="42" textLength="9">Tier-2</text><text x="58" y="50" textLength="18">Employer /</text><text x="59" y="54" textLength="16">Customer</text><text x="58" y="58" textLength="18">Reports &amp;</text><text x="57" y="62" textLength="20">Administrati</text><text x="61" y="66" textLength="13">on App</text><text x="101" y="42" textLength="10">Tier-3</text><text x="99" y="50" textLength="15">Charging</text><text x="99" y="54" textLength="14">Station /</text><text x="101" y="58" textLength="10">Petrol-</text><text x="101" y="62" textLength="10">pump</text><text x="100" y="66" textLength="13">Locator</text><text x="102" y="70" textLength="9">App /</text><text x="98" y="74" textLength="16">Web Order</text></g></svg>
            </div>
            <div class="w-[166px] h-[116px] shrink-0 flex pt-[9px] pl-[13px]">
              <span class="w-[13px] leading-[14px]">3</span>
              <svg class="w-[134px] h-[102px] shrink-0 overflow-visible drop-shadow" viewBox="0 .5 134 102" font-weight="400" fill="#111"><rect x=".8" y="1.200" width="132.500" height="99.700" fill="#fff" stroke="#8b8b8b" stroke-width="1.500"/><rect x="7.700" y="5.700" width="118" height="16" fill="#ffe3d8" stroke="#eba05c" stroke-width="1.300"/><text x="46" y="16.500" font-size="8.300" textLength="41">Tier-1 App</text>
                <g font-size="4.500"><text x="9" y="28">•</text><text x="12" y="28" textLength="102">This app will be used by Operators/users at the Petrol-</text><text x="12" y="33" textLength="50">pump outlet to enter data.</text><text x="9" y="38">•</text><text x="12" y="38" textLength="106">Users will be able to access/enter data or see reports as</text><text x="12" y="42" textLength="72">per the roles defined by administrator.</text><text x="9" y="48">•</text><text x="12" y="48" textLength="109">We already have client application which is currently used</text><text x="12" y="52" textLength="55">by customer to capture data.</text><text x="9" y="57.500">•</text><text x="12" y="57.500" textLength="70">Broadly speaking it covers following :</text></g>
                <g font-size="3.500"><text x="12" y="62.500" textLength="17">– Masters</text><text x="12" y="66.500" textLength="23">– Transaction</text><text x="16" y="70.500" textLength="24">• Purchase Entry</text><text x="16" y="74.500" textLength="19">• Sales Entry</text><text x="16" y="78.500" textLength="23">• Voucher Entry</text><text x="12" y="83" textLength="17">– Reports</text><text x="12" y="87.500" textLength="51">– Administration/Configuration</text></g></svg>
            </div>
            <div class="w-[166px] h-[116px] shrink-0 flex pt-[9px] pl-[13px]">
              <span class="w-[13px] leading-[14px]">4</span>
              <svg class="w-[134px] h-[102px] shrink-0 overflow-visible drop-shadow" viewBox="0 .5 134 102" font-weight="400" fill="#111"><rect x=".8" y="1.200" width="132.500" height="99.700" fill="#fff" stroke="#8b8b8b" stroke-width="1.500"/><rect x="7.700" y="5.700" width="118" height="16" fill="#ecfcd6" stroke="#9bbb59" stroke-width="1.300"/><text x="46" y="16.500" font-size="8.300" textLength="41">Tier-2 App</text>
                <g font-size="5.200"><text x="9" y="29.500">•</text><text x="13" y="29.500" textLength="76">This application will be used by</text><text x="13" y="35.500" textLength="75">Owner/Employer or Customers.</text><text x="9" y="42.500">•</text><text x="13" y="42.500" textLength="102">Owner/Employer will be able to see all the</text><text x="13" y="48.500" textLength="97">reports and or update/delete records as</text><text x="13" y="54" textLength="103">configured through administration module.</text><text x="9" y="61">•</text><text x="13" y="61" textLength="110">Administrator will grant/revoke user rights for</text><text x="13" y="66.500" textLength="95">modules, so specific users can only see</text><text x="13" y="72.500" textLength="45">specified modules.</text><text x="9" y="78.500">•</text><text x="13" y="78.500" textLength="107">Customers will be able to see their own Bills</text><text x="13" y="84.500" textLength="109">and Outstanding and their purchase analysis.</text></g></svg>
            </div>
            <div class="w-[166px] h-[113px] shrink-0 mt-[2px] flex border-[3px] border-[#b98674] bg-linear-to-b from-[#e4a78f] to-[#ffc0a8] pt-[4px] pl-[10px] text-[#4c4c4c]">
              <span class="w-[13px] leading-[14px]">5</span>
              <svg class="w-[134px] h-[101px] shrink-0 overflow-hidden" viewBox="0 .5 134 101" font-weight="400" fill="#111"><rect x=".8" y="1.200" width="132.500" height="99.700" fill="#fff"/><rect x="7.700" y="5.700" width="118" height="16" fill="#cdf0ff" stroke="#4bacc6" stroke-width="1.300"/><text x="46" y="16.500" font-size="8.300" textLength="41">Tier-3 App</text>
                <g font-size="6.100"><text x="9" y="30">•</text><text x="13.500" y="30" textLength="104">This app will be used by Customers</text><text x="13.500" y="37" textLength="102">and Walk-in Customer to Place the</text><text x="13.500" y="44" textLength="18">Order.</text><text x="9" y="52">•</text><text x="13.500" y="52" textLength="103">They can also book the Parking Lot</text><text x="9" y="61">•</text><text x="13.500" y="61" textLength="101">They can also place Bulk order for</text><text x="13.500" y="67.500" textLength="24">delivery.</text><text x="9" y="76">•</text><text x="13.500" y="76" textLength="99">Customer can also Check nearest</text><text x="13.500" y="83" textLength="105">petrol-pump or EV Charging Station</text><text x="13.500" y="90" textLength="107">with type of fuels available and type</text><text x="13.500" y="97" textLength="104">of charging connectors available at</text><text x="13.500" y="104" textLength="24">outlets..</text></g><rect x=".8" y="1.200" width="132.500" height="99.700" fill="none" stroke="#8b8b8b" stroke-width="1.500"/></svg>
            </div>
          </div>
          <div class="w-[7px] h-full bg-[#f2f1f0] pt-[38px]"><div class="w-[7px] h-[417px] bg-[#f28f6b]"></div></div>
        </div>
      </section>
      <!-- left splitter -->
      <div class="w-[6px] shrink-0 border-r border-[#a9a8a6] pt-[258px]"><div class="-ml-[2px] w-[7px] h-[73px] bg-[#96938c] flex items-center"><svg class="w-[6px] h-[8px]" viewBox="0 0 6 8"><path d="M5.500 0v8L.5 4z" fill="#fff"/></svg></div></div>

      <!-- slide canvas -->
      <section class="w-[700px] shrink-0 h-[591px] overflow-hidden flex flex-col">
        <div class="flex h-[583px]">
          <div class="w-[693px] pl-[11px] pt-[39px]">
            <div class="w-[663px] h-[498px] bg-white border border-[#96999c] shadow-[1px_2px_6px_rgba(0,0,0,0.6)] px-[32px] pt-[19px] font-['DejaVu_Sans'] text-black">
              <div class="w-[597px] h-[84px] border border-[#4bacc6] border-b-2 border-b-[#5b9fae] bg-linear-to-b from-[#e5f6ff] to-[#bcebff] shadow-[0_1px_1px_rgba(0,0,0,0.4)] flex items-center justify-center text-[41px] leading-[84px]"><span class="mt-[2px] -ml-[3px]" data-w="205">Tier-3 App</span></div>
              <ul class="mt-[17px] ml-[7px] flex flex-col gap-[6px] text-[30.300px] leading-[35.300px] whitespace-nowrap">
                <li class="flex"><span class="w-[25px] shrink-0 -ml-[3px] mr-[3px] text-[28px]">•</span><div><div data-w="522">This app will be used by Customers</div><div data-w="510">and Walk-in Customer to Place the</div><div data-w="90">Order.</div></div></li>
                <li class="flex"><span class="w-[25px] shrink-0 -ml-[3px] mr-[3px] text-[28px]">•</span><div data-w="516">They can also book the Parking Lot</div></li>
                <li class="flex"><span class="w-[25px] shrink-0 -ml-[3px] mr-[3px] text-[28px]">•</span><div><div data-w="504">They can also place Bulk order for</div><div data-w="123">delivery.</div></div></li>
                <li class="flex"><span class="w-[25px] shrink-0 -ml-[3px] mr-[3px] text-[28px]">•</span><div><div data-w="495">Customer can also Check nearest</div><div data-w="525">petrol-pump or <span class="underline decoration-wavy decoration-1 decoration-[#e02020] underline-offset-[3px]">EV</span> Charging Station</div><div data-w="538">with type of fuels available and type</div><div data-w="521">of charging connectors available at</div><div data-w="120">outlets..</div></div></li>
              </ul>
            </div>
          </div>
          <div class="w-[7px] pt-[124px]"><div class="h-[340px] bg-[#f28f6b]"></div></div>
        </div>
        <div class="h-[8px] pl-[229px]"><div class="w-[240px] h-[7px] bg-[#f28f6b]"></div></div>
      </section>

      <!-- right splitter -->
      <div class="w-[7px] shrink-0 border-l border-r border-t border-[#a9a8a6] pt-[257px] h-[589px]"><div class="-ml-px w-[7px] h-[73px] bg-[#96938c] flex items-center justify-center"><svg class="w-[6px] h-[8px]" viewBox="0 0 6 8"><path d="M.5 0v8l5-4z" fill="#fff"/></svg></div></div>

      <!-- sidebar -->
      <aside class="flex-1 flex h-[589px] border-t border-[#a9a8a6]">
        <div class="ml-[4px] mt-[3px] w-[346px] h-[581px] border border-[#dfdedc] flex flex-col">
          <div class="h-[26px] shrink-0 flex items-center pl-[10px] font-bold text-[14px] leading-[28px]"><span data-w="76">Properties</span><svg class="ml-[244px] mt-[5px] size-[9px]" viewBox="0 0 9 9"><path d="M1 1l7 7M8 1L1 8" stroke="#3c3c3c" stroke-width="2"/></svg></div>
          <div class="h-[27px] shrink-0 flex items-center bg-linear-to-b from-[#e1e0df] to-[#f2f1f0] pl-[5px] font-bold text-[14px] leading-[29px]">
            <svg class="size-[9px]" viewBox="0 0 9 9"><rect x=".5" y=".5" width="8" height="8" fill="#dfe6f0" stroke="#3b4759"/><path d="M2 4.500h5" stroke="#222"/></svg>
            <span class="ml-[5px] mt-[2px]" data-w="36">Slide</span>
            <svg class="ml-[273px] mt-[4px] w-[11px] h-[10px]" viewBox="0 0 11 10"><rect x=".5" y=".5" width="10" height="9" fill="#fff" stroke="#2f62ae"/><path d="M0 1.500h11" stroke="#5b8fd6" stroke-width="2"/><path d="M3 6.500h1M5 6.500h1M7 6.500h1" stroke="#222"/></svg>
          </div>
          <div class="h-[289px] shrink-0 pt-[7px] grid grid-cols-[103px_211px] gap-x-[8px] content-start leading-[28px] text-[14px]">
            <div class="text-right h-[39px]"><span class="mt-px" data-w="53">Format:</span></div>
            <div class="h-[31px] rounded-[4px] border border-[#aeacaa] bg-linear-to-b from-white to-[#ebeae9] flex items-center justify-between pl-[5px] pr-[8px]"><span class="-mt-px" data-w="31">User</span><svg class="w-[10px] h-[6px]" viewBox="0 0 10 6"><path d="M0 .5h10L5 5.500z"/></svg></div>
            <div class="text-right h-[39px]"><span class="mt-px" data-w="85">Orientation:</span></div>
            <div class="h-[31px] rounded-[4px] border border-[#aeacaa] bg-linear-to-b from-white to-[#ebeae9] flex items-center justify-between pl-[5px] pr-[8px]"><span class="-mt-px" data-w="73">Landscape</span><svg class="w-[10px] h-[6px]" viewBox="0 0 10 6"><path d="M0 .5h10L5 5.500z"/></svg></div>
            <div class="text-right h-[39px]"><span class="mt-px" data-w="87">Background:</span></div>
            <div class="h-[31px] rounded-[4px] border border-[#aeacaa] bg-linear-to-b from-white to-[#ebeae9] flex items-center justify-between pl-[5px] pr-[8px]"><span class="-mt-px" data-w="37">None</span><svg class="w-[10px] h-[6px]" viewBox="0 0 10 6"><path d="M0 .5h10L5 5.500z"/></svg></div>
            <div class="h-[37px]"></div>
            <div class="h-[29px] rounded-[4px] border border-[#aeacaa] bg-linear-to-b from-white to-[#ebeae9] flex items-center justify-center"><span class="-mt-px" data-w="85">Insert Image</span></div>
            <div class="text-right h-[38px]"><span class="mt-px" data-w="88">Master Slide:</span></div>
            <div class="h-[31px] rounded-[4px] border border-[#aeacaa] bg-linear-to-b from-white to-[#ebeae9] flex items-center justify-between pl-[5px] pr-[8px]"><span class="-mt-px" data-w="118">Title and Content</span><svg class="w-[10px] h-[6px]" viewBox="0 0 10 6"><path d="M0 .5h10L5 5.500z"/></svg></div>
            <div class="h-[26px]"></div>
            <div class="h-[19px] flex items-center pl-[1px]"><svg class="w-[15px] h-[15px]" viewBox="0 0 15 15"><rect x=".5" y=".5" width="14" height="14" rx="2.500" fill="#d9633a" stroke="#a9431f"/><path d="M3.500 7.500l3 3.500 5-7" stroke="#fff" stroke-width="2" fill="none"/></svg><span class="ml-[7px]" data-w="134">Master Background</span></div>
            <div class="h-[26px]"></div>
            <div class="h-[19px] flex items-center pl-[1px]"><svg class="w-[15px] h-[15px]" viewBox="0 0 15 15"><rect x=".5" y=".5" width="14" height="14" rx="2.500" fill="#d9633a" stroke="#a9431f"/><path d="M3.500 7.500l3 3.500 5-7" stroke="#fff" stroke-width="2" fill="none"/></svg><span class="ml-[7px]" data-w="103">Master Objects</span></div>
            <div></div>
            <div class="h-[29px] rounded-[4px] border border-[#aeacaa] bg-linear-to-b from-white to-[#ebeae9] flex items-center justify-center gap-[4px]"><svg class="w-[16px] h-[12px]" viewBox="1 3 22 18" preserveAspectRatio="none"><use href="#master" width="24" height="24"/></svg><span data-w="85">Master View</span></div>
          </div>
          <div class="h-[26px] shrink-0 flex items-center bg-linear-to-b from-[#e1e0df] to-[#f2f1f0] pl-[5px] font-bold text-[14px] leading-[30px]">
            <svg class="size-[9px]" viewBox="0 0 9 9"><rect x=".5" y=".5" width="8" height="8" fill="#dfe6f0" stroke="#3b4759"/><path d="M2 4.500h5" stroke="#222"/></svg>
            <span class="ml-[5px]" data-w="57">Layouts</span>
          </div>
          <div id="layouts" class="w-[344px] h-[198px] shrink-0 grid grid-cols-4 grid-rows-3 bg-[#423f38]"></div>
        </div>
        <!-- tab bar -->
        <div class="w-[40px] flex flex-col items-center">
          <svg class="mt-[15px] w-[10px] h-[9px]" viewBox="0 0 10 9"><path d="M0 1h6M0 3.500h6M0 6h4" stroke="#2b3b55" stroke-width="1.200"/><path d="M4 5.500h5.500L6.700 8.500z" fill="#111"/></svg>
          <i class="mt-[14px] w-[24px] h-px bg-[#dddbd9]"></i>
          <div class="mt-[3px] w-[32px] h-[32px] rounded-[4px] border border-[#bdbbb9] flex items-center justify-center"><svg class="size-[24px]" viewBox="0 0 24 24"><path d="M2 5l3 2 2-2-1.500-3.500Q11 2 11 7.500L17 14q5-1 6 4l-1.500 4.500-1-3-3 0-1 2Q13 19 14 16L8 9.500Q3 11 2 5z" fill="#efefed" stroke="#84847f" stroke-width="1.100"/></svg></div>
          <svg class="mt-[7px] size-[24px]" viewBox="0 0 24 24"><rect x="1.500" y="4.500" width="10" height="15" fill="#f4f4f2" stroke="#777"/><path d="M4 7.500h5M4 10h5M4 12.500h5M4 15h5" stroke="#777"/><path d="M9 3.500h14v17H9z" fill="#75507b"/><path d="M9.500 3.500v17M9 3.500h12M9 20.500h12" stroke="#452750"/><path d="M12 7.500h11M12 7.500v8M12 10h11M16 13.500h7" stroke="#e3d3e8"/></svg>
          <svg class="mt-[11px] size-[24px]" viewBox="0 0 24 24"><path d="M17 5h6M18 8h5M19 12h4M18 15h5M18 18h5M18 21h5" stroke="#d6b82a" stroke-width="1.200"/><path d="M11.500 2l2.600 6.800 6.700.4-5.400 4.400 2.100 7.200-6-4.200-6.300 4.200 2-7.200L1.700 9.200l6.900-.4z" fill="#f9e34a" stroke="#b8970b" stroke-width="1.400"/></svg>
          <svg class="mt-[10px] size-[24px]"><use href="#master"/></svg>
          <svg class="mt-[12px] size-[24px]" viewBox="0 0 24 24"><path d="M3.500 2.500h17v5h-2l-.8-2H14.500v14h2v2h-9v-2h2v-14H6.500l-.8 2h-2.200z" fill="#60666a" stroke="#3a3f42"/><path d="M.8 7.500v15h20z" fill="#8ed06a" stroke="#3e8f1d" stroke-width="1.200"/><path d="M4.500 14.500v4.500h6z" fill="#d4f0c2" stroke="#3e8f1d"/></svg>
          <svg class="mt-[10px] size-[24px]" viewBox="0 0 24 24"><path d="M8 6l4-4 4 4" fill="none" stroke="#777"/><rect x="2" y="6.500" width="20" height="13" fill="#8b9db0" stroke="#9a5a07" stroke-width="2.600"/><rect x="3.500" y="12" width="17" height="6" fill="url(#gold)"/><circle cx="7" cy="15.500" r="2" fill="#fff2a0"/><path d="M14 18v-5l-3-4M14 13l4-4M15 12h4" stroke="#2c1d0b" fill="none"/><rect x="2" y="6.500" width="20" height="13" fill="none" stroke="#e8a33c"/></svg>
          <svg class="mt-[12px] size-[24px]" viewBox="0 0 24 24"><circle cx="12" cy="12" r="9.600" fill="#f8f8f8" stroke="#888a85" stroke-width="2.600"/><circle cx="12" cy="12" r="9.600" fill="none" stroke="#d3d4d1" stroke-width=".9"/><path d="M12 4v3M12 17v3M4 12h3M17 12h3" stroke="#aaa"/><path d="M7 6.500l6.500 4-3 3z" fill="#cf2424"/><path d="M17 17.500l-6.500-4 3-3z" fill="#3a67a8"/></svg>
        </div>
      </aside>
    </main>

    <!-- status bar -->
    <footer class="h-[21px] shrink-0 flex items-center border-t border-[#b4b2b0] text-[12px] leading-[20px]">
      <span class="ml-[10px]" data-w="61">Slide 5 of 6</span>
      <i class="ml-[4px] w-px h-[15px] bg-[#96938f]"></i>
      <i class="ml-[249px] w-px h-[15px] bg-[#96938f]"></i>
      <span class="ml-[10px]" data-w="96">Title and Content</span>
      <i class="ml-[57px] w-px h-[15px] bg-[#96938f]"></i>
      <svg class="ml-[11px] w-[14px] h-[13px]" viewBox="0 0 14 13"><path d="M0 4.500h7M3.500 0v9" stroke="#2323a8"/><path d="M4.500 5.500h8v7h-8z" fill="none" stroke="#222" stroke-dasharray="1 1"/></svg>
      <span class="ml-[5px]" data-w="63">-0.39 / 6.96</span>
      <svg class="ml-[120px] w-[15px] h-[13px]" viewBox="0 0 15 13"><path d="M1.500 4v9M0 4.500h3M0 12.500h3M5 1.500h9M5.500 0v3M13.500 0v3" stroke="#222" fill="none" stroke-dasharray="2 1"/><path d="M5.500 4.500h8v8h-8z" fill="none" stroke="#222" stroke-dasharray="1 1"/></svg>
      <span class="ml-[5px]" data-w="60">0.00 x 0.00</span>
      <i class="ml-[119px] w-px h-[15px] bg-[#96938f]"></i>
      <svg class="ml-[7px] w-[12px] h-[12px]" viewBox="0 0 12 12"><path d="M9 3.500V1H.8v10H9" fill="none" stroke="#999" stroke-width="1.200"/><path d="M4 6l2.500 3L11 4" fill="none" stroke="#999" stroke-width="1.500"/></svg>
      <i class="ml-[2px] w-px h-[15px] bg-[#96938f]"></i>
      <i class="ml-[28px] w-px h-[15px] bg-[#96938f]"></i>
      <span class="ml-[34px]" data-w="72">English (USA)</span>
      <i class="ml-[32px] w-px h-[15px] bg-[#96938f]"></i>
      <svg class="ml-[6px] size-[13px]" viewBox="0 0 13 13"><path d="M6.500 1v11M1 6.500h11" stroke="#111" stroke-width="1.600"/><path d="M6.500 0l2.500 3H4zM6.500 13L4 10h5zM0 6.500L3 4v5zM13 6.500L10 9V4z" fill="#111"/></svg>
      <i class="ml-[2px] w-px h-[15px] bg-[#96938f]"></i>
      <svg class="ml-[10px] w-[126px] h-[14px]" viewBox="0 0 126 14"><path d="M0 7h8M117 7h8M121 3v8" stroke="#8f8c89" stroke-width="2"/><path d="M14 7h97M61.500 2v10" stroke="#b0adaa" stroke-width="2"/><circle cx="46.500" cy="7" r="4" fill="#fff" stroke="#85827f" stroke-width="1.200"/></svg>
      <i class="ml-[6px] w-px h-[15px] bg-[#96938f]"></i>
      <span class="ml-[7px]" data-w="25">69%</span>
    </footer>
  </div>
</div>

<script>
  // Slide layout previews: [x, y, w, h, kind] with kind b = blue bar, f = frame
  const title = [[5, 4, 51, 9, 'f'], [10, 7, 41, 3, 'b']];
  const layouts = [
    [],
    [...title, [5, 17, 51, 26, 'f'], [18, 25, 25, 2, 'b']],
    [...title, [5, 17, 51, 26, 'f']],
    [...title, [5, 17, 24, 26, 'f'], [32, 17, 24, 26, 'f']],
    [...title],
    [[17, 20, 27, 2, 'b'], [22, 25, 17, 2, 'b']],
    [...title, [5, 17, 24, 12, 'f'], [5, 31, 24, 12, 'f'], [32, 17, 24, 26, 'f']],
    [...title, [5, 17, 24, 26, 'f'], [32, 17, 24, 12, 'f'], [32, 31, 24, 12, 'f']],
    [...title, [5, 17, 24, 12, 'f'], [32, 17, 24, 12, 'f'], [5, 31, 51, 12, 'f']],
    [...title, [5, 17, 51, 12, 'f'], [5, 31, 51, 12, 'f']],
    [...title, [5, 17, 24, 12, 'f'], [32, 17, 24, 12, 'f'], [5, 31, 24, 12, 'f'], [32, 31, 24, 12, 'f']],
    [...title, [5, 17, 15, 12, 'f'], [23, 17, 15, 12, 'f'], [41, 17, 15, 12, 'f'], [5, 31, 15, 12, 'f'], [23, 31, 15, 12, 'f'], [41, 31, 15, 12, 'f']]
  ];
  document.getElementById('layouts').innerHTML = layouts.map(parts =>
    '<div class="m-[2px] bg-[#f2f1f0] pt-[7px] pl-[10px]"><svg class="w-[61px] h-[47px]" viewBox="0 0 61 47">' +
    '<rect x=".5" y=".5" width="60" height="46" fill="#fff" stroke="#8d8d8b"/><rect x="2" y="2" width="57" height="43" fill="url(#paper)"/>' +
    parts.map(([x, y, w, h, k]) => k === 'b'
      ? `<rect x="${x}" y="${y}" width="${w}" height="${h}" fill="#729fcf"/>`
      : `<rect x="${x + .5}" y="${y + .5}" width="${w - 1}" height="${h - 1}" fill="none" stroke="#c9c9c9"/>`).join('') +
    '</svg></div>').join('');

  // Track each label to its designed width, once the stylesheet is in force
  function fitLabels() {
    for (const el of document.querySelectorAll('[data-w]')) {
      const target = Number(el.dataset.w);
      el.style.letterSpacing = '0px';
      el.style.width = 'auto';
      el.style.display = 'inline-block';
      el.style.whiteSpace = 'nowrap';
      const range = document.createRange();
      range.selectNodeContents(el);
      const width = range.getBoundingClientRect().width;
      el.style.letterSpacing = (target - width) / (el.textContent.length - 1) + 'px';
      el.style.width = target + 'px';
      el.style.flexShrink = 0;
      if (el.tagName === 'DIV') el.style.display = 'block';
    }
  }
  function whenStyled() {
    if (getComputedStyle(document.body).display === 'flex') fitLabels();
    else requestAnimationFrame(whenStyled);
  }
  whenStyled();
  window.addEventListener('load', fitLabels);
</script>
</body>
</html>
